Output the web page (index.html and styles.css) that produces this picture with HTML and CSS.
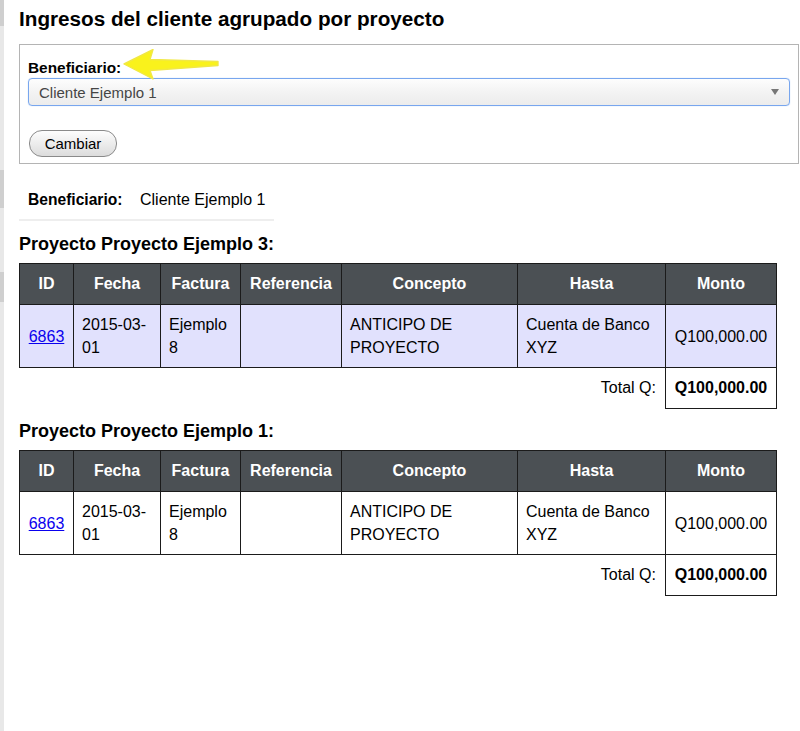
FILE: index.html
```html
<!DOCTYPE html>
<html lang="es">
<head>
<meta charset="utf-8">
<title>Ingresos del cliente agrupado por proyecto</title>
<link rel="stylesheet" href="styles.css">
</head>
<body>
<div class="page">
  <aside class="edge">
    <span class="edge-dark edge-a"></span>
    <span class="edge-gap edge-g1"></span>
    <span class="edge-dark edge-b"></span>
    <span class="edge-gap edge-g2"></span>
    <span class="edge-dark edge-c"></span>
  </aside>
  <main class="content">
    <h1 class="title">Ingresos del cliente agrupado por proyecto</h1>
    <form class="filter">
      <label class="filter-label">Beneficiario:</label>
      <svg class="arrow" width="98" height="32" viewBox="0 0 98 32">
        <path d="M1 15 L30 0.5 L27 10.5 L95 12.5 L95 16.5 L27 21.5 L30 30 Z" fill="#f9f21c" stroke="#f1e845" stroke-width="1.4" stroke-linejoin="round"/>
      </svg>
      <div class="select">
        <span>Cliente Ejemplo 1</span>
        <span class="caret"></span>
      </div>
      <button type="button" class="btn">Cambiar</button>
    </form>

    <div class="summary">
      <span class="summary-label">Beneficiario:</span>
      <span class="summary-value">Cliente Ejemplo 1</span>
    </div>

    <h2 class="project">Proyecto Proyecto Ejemplo 3:</h2>
    <table class="grid">
      <colgroup>
        <col class="c-id"><col class="c-fecha"><col class="c-factura"><col class="c-ref"><col class="c-concepto"><col class="c-hasta"><col class="c-monto">
      </colgroup>
      <thead>
        <tr><th>ID</th><th>Fecha</th><th>Factura</th><th>Referencia</th><th>Concepto</th><th>Hasta</th><th>Monto</th></tr>
      </thead>
      <tbody>
        <tr class="hl">
          <td class="id"><a href="#">6863</a></td>
          <td>2015-03-<br>01</td>
          <td>Ejemplo<br>8</td>
          <td></td>
          <td>ANTICIPO DE<br>PROYECTO</td>
          <td>Cuenta de Banco<br>XYZ</td>
          <td class="monto">Q100,000.00</td>
        </tr>
        <tr class="total">
          <td colspan="6" class="total-label">Total Q:</td>
          <td class="total-value">Q100,000.00</td>
        </tr>
      </tbody>
    </table>

    <h2 class="project">Proyecto Proyecto Ejemplo 1:</h2>
    <table class="grid">
      <colgroup>
        <col class="c-id"><col class="c-fecha"><col class="c-factura"><col class="c-ref"><col class="c-concepto"><col class="c-hasta"><col class="c-monto">
      </colgroup>
      <thead>
        <tr><th>ID</th><th>Fecha</th><th>Factura</th><th>Referencia</th><th>Concepto</th><th>Hasta</th><th>Monto</th></tr>
      </thead>
      <tbody>
        <tr>
          <td class="id"><a href="#">6863</a></td>
          <td>2015-03-<br>01</td>
          <td>Ejemplo<br>8</td>
          <td></td>
          <td>ANTICIPO DE<br>PROYECTO</td>
          <td>Cuenta de Banco<br>XYZ</td>
          <td class="monto">Q100,000.00</td>
        </tr>
        <tr class="total">
          <td colspan="6" class="total-label">Total Q:</td>
          <td class="total-value">Q100,000.00</td>
        </tr>
      </tbody>
    </table>
  </main>
</div>
</body>
</html>
```
FILE: styles.css
```css
html, body {
  margin: 0;
  padding: 0;
  background: #fff;
}
body {
  font-family: "Liberation Sans", Arial, Helvetica, sans-serif;
  color: #000;
}
.page {
  display: flex;
  min-height: 731px;
}
.edge {
  width: 4px;
  flex: none;
  background: #e8e8e8;
  display: flex;
  flex-direction: column;
}
.edge-dark { display: block; background: #cfcfcf; }
.edge-gap { display: block; }
.edge-a { height: 26px; }
.edge-g1 { height: 144px; }
.edge-b { height: 38px; }
.edge-g2 { height: 64px; }
.edge-c { height: 30px; }

.content {
  flex: 1;
  padding-left: 15px;
  padding-right: 1px;
}
.title {
  margin: 0;
  padding-top: 6px;
  font-size: 20.7px;
  line-height: 25px;
  font-weight: bold;
}
.filter {
  position: relative;
  margin: 13px 0 0 0;
  border: 1px solid #b4b4b4;
  padding: 14px 8px 7px 8px;
  height: 97px;
}
.filter-label {
  display: block;
  font-size: 15.4px;
  font-weight: bold;
  line-height: 18px;
}
.arrow {
  position: absolute;
  left: 103px;
  top: 4px;
}
.select {
  margin-top: 1px;
  height: 26px;
  border: 1px solid #78a6ee;
  border-radius: 4px;
  background: linear-gradient(#fdfdfd 0%, #f4f4f4 45%, #ececec 100%);
  display: flex;
  align-items: center;
  justify-content: space-between;
  padding: 0 10px;
  font-size: 15px;
  color: #454545;
  box-shadow: 0 0 1px #9cc0f5;
}
.caret {
  width: 0;
  height: 0;
  border-left: 4px solid transparent;
  border-right: 4px solid transparent;
  border-top: 6px solid #777;
}
.btn {
  display: block;
  margin-top: 24px;
  margin-left: 1px;
  width: 88px;
  height: 27px;
  border: 1px solid #8a8a8a;
  border-radius: 13px;
  background: linear-gradient(#fdfdfd, #dcdcdc);
  font-family: "Liberation Sans", Arial, sans-serif;
  font-size: 15px;
  color: #000;
  padding: 0;
}
.summary {
  display: flex;
  width: 246px;
  margin-top: 26px;
  padding: 1px 0 10px 9px;
  border-bottom: 2px solid #eeeeee;
  font-size: 16px;
  line-height: 18px;
}
.summary-label {
  font-weight: bold;
  font-size: 15.6px;
  width: 112px;
  flex: none;
}
.project {
  margin: 12px 0 0 0;
  font-size: 18px;
  line-height: 22px;
  font-weight: bold;
}
.grid + .project {
  margin-top: 11px;
}
.grid {
  margin-top: 8px;
  border-collapse: collapse;
  width: 757px;
  table-layout: fixed;
  font-size: 16px;
}
.c-id { width: 54px; }
.c-fecha { width: 87px; }
.c-factura { width: 80px; }
.c-ref { width: 101px; }
.c-concepto { width: 176px; }
.c-hasta { width: 148px; }
.c-monto { width: 111px; }
.grid th {
  background: #4b5054;
  color: #fff;
  font-weight: bold;
  height: 40px;
  padding: 0;
  border: 1px solid #1b1b1b;
  text-align: center;
}
.grid td {
  border: 1px solid #1b1b1b;
  padding: 8px 8px 8px 8px;
  line-height: 23px;
  vertical-align: middle;
  height: 46px;
}
.grid tr.hl td {
  background: #e1e1fd;
}
.grid td.id { text-align: center; padding: 0; }
.grid td.id a { color: #0a00ee; }
.grid td.monto { text-align: center; padding: 0; }
.grid tr.total td {
  height: 40px;
  padding: 0;
  line-height: 20px;
}
.grid tr.total td.total-label {
  border: none;
  border-right: 1px solid #1b1b1b;
  text-align: right;
  padding-right: 9px;
}
.grid tr.total td.total-value {
  text-align: center;
  font-weight: bold;
}
```
